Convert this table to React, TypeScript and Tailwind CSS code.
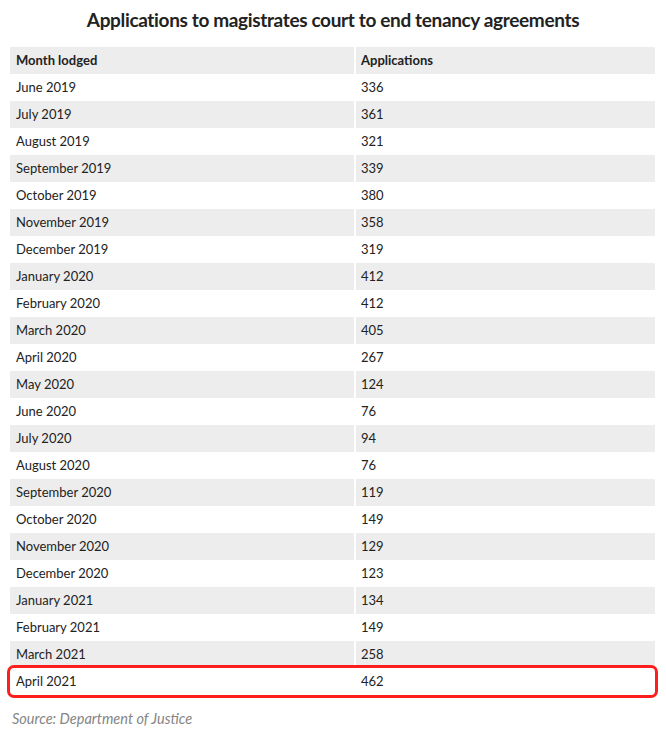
import React from "react";

const rows: [string, string][] = [
  ["June 2019", "336"],
  ["July 2019", "361"],
  ["August 2019", "321"],
  ["September 2019", "339"],
  ["October 2019", "380"],
  ["November 2019", "358"],
  ["December 2019", "319"],
  ["January 2020", "412"],
  ["February 2020", "412"],
  ["March 2020", "405"],
  ["April 2020", "267"],
  ["May 2020", "124"],
  ["June 2020", "76"],
  ["July 2020", "94"],
  ["August 2020", "76"],
  ["September 2020", "119"],
  ["October 2020", "149"],
  ["November 2020", "129"],
  ["December 2020", "123"],
  ["January 2021", "134"],
  ["February 2021", "149"],
  ["March 2021", "258"],
  ["April 2021", "462"],
];

export default function App() {
  return (
    <div className="w-[666px] h-[743px] bg-white font-['Lato',sans-serif] text-[#222]">
      <h1 className="pt-[8px] h-[47px] text-center text-[19px] tracking-[-0.35px] font-bold text-[#222] leading-[24px]">
        Applications to magistrates court to end tenancy agreements
      </h1>
      <div className="mx-[10px] w-[645px]">
        <div className="grid grid-cols-[344px_1fr] gap-x-[2px] h-[27px] text-[13px] font-bold items-center">
          <div className="pl-[6px] h-full flex items-center bg-[#ededed]">Month lodged</div>
          <div className="pl-[5px] h-full flex items-center bg-[#ededed]">Applications</div>
        </div>
        {rows.map(([month, count], idx) => {
          const last = idx === rows.length - 1;
          const gray = idx % 2 === 1;
          return (
            <div
              key={month}
              className={`grid grid-cols-[344px_1fr] gap-x-[2px] h-[27px] items-center text-[13px] bg-white ${
                last ? "outline-[3px] outline-solid outline-[#fe1e1e] rounded-[4px] relative z-10" : ""
              }`}
            >
              <div className={`pl-[6px] h-full flex items-center ${gray ? "bg-[#ededed]" : ""}`}>{month}</div>
              <div className={`pl-[5px] h-full flex items-center ${gray ? "bg-[#ededed]" : ""}`}>{count}</div>
            </div>
          );
        })}
      </div>
      <p className="mt-[13px] pl-[12px] text-[14.5px] italic text-[#858585]">Source: Department of Justice</p>
    </div>
  );
}
